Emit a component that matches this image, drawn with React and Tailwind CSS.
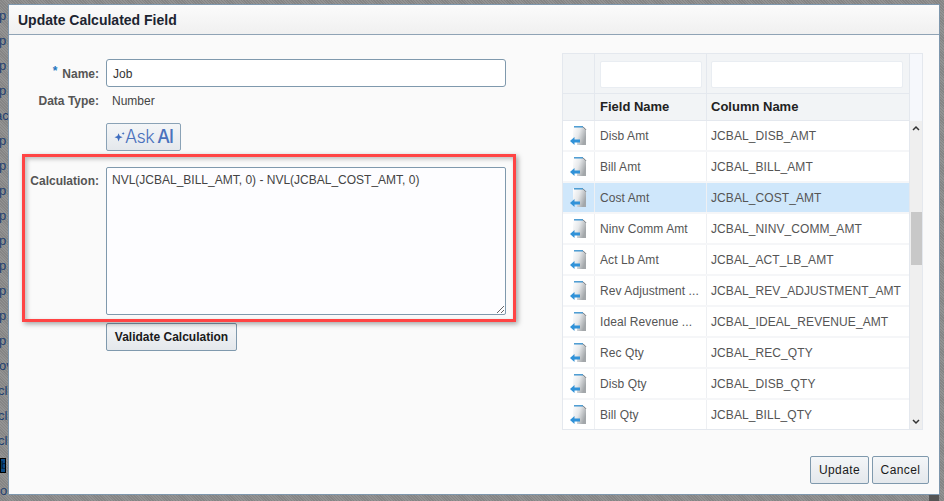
const sideRows = [
  ["p", "-ml-[1px]"], ["p", "-ml-[1px]"], ["p", "-ml-[1px]"], ["p", "-ml-[1px]"], ["ac", "-ml-[5px]"],
  ["p", "-ml-[1px]"], ["p", "-ml-[1px]"], ["p", "-ml-[1px]"], ["p", "-ml-[1px]"], ["p", "-ml-[1px]"],
  ["p", "-ml-[1px]"], ["p", "-ml-[1px]"], ["p", "-ml-[1px]"], ["p", "-ml-[1px]"], ["ov", "-ml-[1px]"],
  ["cl", "-ml-[2px]"], ["cl", "-ml-[2px]"], ["cl", "-ml-[2px]"], ["b", ""], ["o", "ml-0"],
];

const rows = [
  ["Disb Amt", "JCBAL_DISB_AMT"],
  ["Bill Amt", "JCBAL_BILL_AMT"],
  ["Cost Amt", "JCBAL_COST_AMT", true],
  ["Ninv Comm Amt", "JCBAL_NINV_COMM_AMT"],
  ["Act Lb Amt", "JCBAL_ACT_LB_AMT"],
  ["Rev Adjustment ...", "JCBAL_REV_ADJUSTMENT_AMT"],
  ["Ideal Revenue ...", "JCBAL_IDEAL_REVENUE_AMT"],
  ["Rec Qty", "JCBAL_REC_QTY"],
  ["Disb Qty", "JCBAL_DISB_QTY"],
  ["Bill Qty", "JCBAL_BILL_QTY"],
];

function InsertIcon() {
  return (
    <svg width="18" height="20" viewBox="0 0 18 20">
      <defs>
        <linearGradient id="pg" x1="0" y1="0" x2="1" y2="0.5">
          <stop offset="0" stopColor="#ffffff" />
          <stop offset="0.5" stopColor="#e6e8ea" />
          <stop offset="1" stopColor="#a3a7aa" />
        </linearGradient>
      </defs>
      <path d="M4 0.5h10l3 3V19H8v-3H4z" fill="url(#pg)" />
      <path d="M5 0.8h9" stroke="#3d93cf" strokeWidth="1.4" />
      <path d="M14 0.8l3 3" stroke="#777c80" strokeWidth="1" />
      <path d="M1 15l4.5-4v2.4H11v3.2H5.5V19z" fill="#3192d8" />
    </svg>
  );
}

function Btn({ children, className = "" }) {
  return (
    <button className={`h-7 rounded-[2px] border border-[#7f99ad] bg-gradient-to-b from-[#f4f6f8] to-[#e4e8ec] pb-[1px] text-xs text-[#1a1a1a] ${className}`}>
      {children}
    </button>
  );
}

export default function App() {
  return (
    <div className="relative h-[501px] w-[944px] overflow-hidden bg-[repeating-linear-gradient(45deg,#858585_0,#858585_1px,#939393_1px,#939393_2px)] font-['Liberation_Sans',Arial,sans-serif] text-xs">
      <div className="flex w-[9px] flex-col overflow-hidden pt-[3px] text-[13px] leading-[25px] text-[#1f3f70]">
        {sideRows.map(([t, offset], i) => (
          <div key={i} className="flex h-[25px] items-center whitespace-nowrap">
            {t === "b" ? (
              <span className="h-[15px] w-[6px] overflow-hidden border border-black bg-[#0b4a86] text-[11px] leading-[13px] text-[#021b33]">b</span>
            ) : (
              <span className={offset}>{t}</span>
            )}
          </div>
        ))}
      </div>

      <div className="absolute left-[929px] top-[494px] h-[7px] w-[10px] bg-[#555]" />

      <div className="absolute left-[9px] top-[5px] flex h-[489px] w-[930px] flex-col bg-[#fafafa] shadow-[0_0_0_1px_#7e97ad]">
        <div className="flex h-[30px] shrink-0 items-center border-b border-[#8fa3b5] bg-gradient-to-b from-[#fbfbfb] to-[#f0f0f0] pl-[9px] pt-[1px] text-sm font-bold text-[#1c2430]">
          Update Calculated Field
        </div>

        <div className="flex min-h-0 flex-1 pt-[18px]">
          <div className="w-[553px] shrink-0 pt-[6px]">
            <div className="grid grid-cols-[90px_400px] gap-x-[7px] text-[#555]">
              <div className="flex h-7 items-center justify-end pt-[1px] font-bold">
                <span className="mr-[5px] -mt-[6px] text-[#1e78c0]">*</span>Name:
              </div>
              <div className="flex h-7 items-center rounded-[3px] border border-[#7f99ad] bg-white pl-[6px] pt-[1px] text-[#333]">Job</div>

              <div className="mt-[4px] flex h-[20px] items-center justify-end font-bold">Data Type:</div>
              <div className="mt-[4px] flex h-[20px] items-center pl-[6px] text-[#444]">Number</div>

              <div className="col-start-2 mt-[12px]">
                <div className="flex h-7 w-[75px] items-center justify-center rounded-[2px] border border-[#8aa2b6] bg-gradient-to-b from-[#f4f6f8] to-[#e4e8ec] font-['Inter',sans-serif] text-[18px] leading-none text-[#4a72bd]">
                  <svg width="11" height="12" viewBox="0 0 12 12" className="shrink-0">
                    <path d="M5 2l1.3 3L9.5 6.2 6.3 7.4 5 11 3.7 7.4 0.5 6.2 3.7 5z" fill="#3f6dbf" />
                    <path d="M10 0.5l.5 1.2 1.2.5-1.2.5-.5 1.2-.5-1.2-1.2-.5 1.2-.5z" fill="#3f6dbf" />
                  </svg>
                  <span className="font-light tracking-[-0.6px]">Ask</span>
                  <span className="ml-[3px] font-medium tracking-[-1px]">AI</span>
                </div>
              </div>

              <div className="mt-[16px] pt-[6px] text-right font-bold">Calculation:</div>
              <div className="mt-[16px] h-[148px] w-[400px]">
                <textarea
                  readOnly
                  defaultValue="NVL(JCBAL_BILL_AMT, 0) - NVL(JCBAL_COST_AMT, 0)"
                  className="block h-[148px] w-[400px] rounded-[2px] border border-[#7f99ad] bg-[#fdfdff] px-[5px] py-[5px] text-xs leading-[14px] text-[#444] outline-none"
                />
              </div>

              <div className="col-start-2 mt-[8px]">
                <Btn className="w-[131px] font-bold">Validate Calculation</Btn>
              </div>
            </div>
          </div>

          <div className="flex h-[377px] w-[361px] shrink-0 overflow-hidden border border-[#e4e8ee] text-xs">
            <div className="flex w-[346px] shrink-0 flex-col">
              <div className="flex h-[40px] shrink-0 border-b border-[#e4e8ee] bg-[#f2f4f6]">
                <div className="w-[32px] shrink-0 border-r border-[#e4e8ee]" />
                <div className="flex w-[112px] shrink-0 items-center justify-center border-r border-[#e4e8ee] pt-[1px]">
                  <div className="h-[27px] w-[102px] rounded-[2px] border border-[#e9edf2] bg-white" />
                </div>
                <div className="flex flex-1 items-center justify-center pr-[2px] pt-[1px]">
                  <div className="h-[27px] w-[192px] rounded-[2px] border border-[#e9edf2] bg-white" />
                </div>
              </div>
              <div className="flex h-[27px] shrink-0 border-b border-[#e4e8ee] bg-[#f2f4f6] text-[13px] font-bold text-[#222]">
                <div className="w-[32px] shrink-0 border-r border-[#e4e8ee]" />
                <div className="flex w-[112px] shrink-0 items-center border-r border-[#e4e8ee] pl-[5px]">Field Name</div>
                <div className="flex flex-1 items-center pl-[4px]">Column Name</div>
              </div>
              {rows.map(([a, b, sel]) => (
                <div key={b} className={`flex h-[31px] shrink-0 border-b-2 border-[#f5f6f8] tracking-[0.08px] text-[#555] ${sel ? "bg-[#cfe7fb]" : "bg-white"}`}>
                  <div className="flex w-[32px] shrink-0 items-center justify-center border-r border-[#eef0f3] pr-[2px]"><InsertIcon /></div>
                  <div className="flex w-[112px] shrink-0 items-center whitespace-nowrap border-r border-[#eef0f3] pl-[5px]">{a}</div>
                  <div className="flex flex-1 items-center whitespace-nowrap pl-[4px]">{b}</div>
                </div>
              ))}
            </div>
            <div className="flex flex-1 flex-col border-l border-[#e4e8ee]">
              <div className="h-[67px] shrink-0 bg-[#f6f8fc]" />
              <div className="flex flex-1 flex-col items-center bg-[#efefef]">
                <svg width="8" height="14" viewBox="0 0 8 14" className="mt-[1px] shrink-0"><path d="M1 8l3-3 3 3" fill="none" stroke="#333" strokeWidth="1.5" /></svg>
                <div className="mt-[76px] h-[53px] w-[11px] shrink-0 bg-[#c8c8c8]" />
                <div className="flex-1" />
                <svg width="8" height="14" viewBox="0 0 8 14" className="mb-[1px] shrink-0"><path d="M1 6l3 3 3-3" fill="none" stroke="#333" strokeWidth="1.5" /></svg>
              </div>
            </div>
          </div>
        </div>

        <div className="flex h-[38px] shrink-0 items-start justify-end gap-[3px] pr-[10px]">
          <Btn className="w-[59px] tracking-[0.4px]">Update</Btn>
          <Btn className="w-[57px] tracking-[0.4px]">Cancel</Btn>
        </div>
      </div>

      <div className="pointer-events-none absolute left-[22px] top-[154px] h-[168px] w-[494px] border-[3px] border-[#ff4444] shadow-[2px_2px_5px_rgba(0,0,0,0.35),inset_2px_2px_4px_rgba(0,0,0,0.25)]" />
    </div>
  );
}
